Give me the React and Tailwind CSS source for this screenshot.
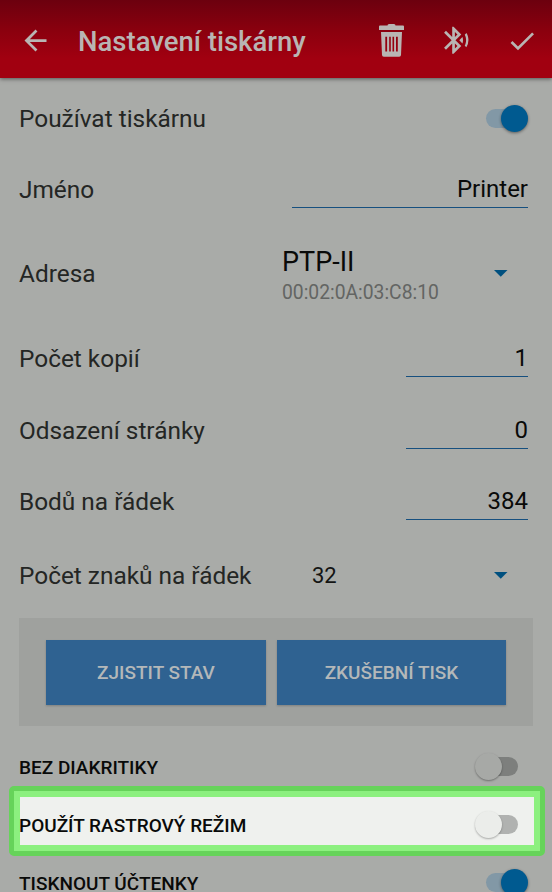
import React from 'react';
import { MdArrowBack, MdBluetoothAudio, MdCheck } from 'react-icons/md';

function TrashIcon() {
  return (
    <svg width="25" height="33" viewBox="0 0 25 33" fill="currentColor" aria-hidden="true">
      <path d="M8.500 1.500Q8.500 0 10 0h5q1.500 0 1.500 1.500H24q1 0 1 1V6H0V2.500q0-1 1-1z" />
      <path
        fillRule="evenodd"
        d="M2 8h21l-1 23q-.1 1.700-1.800 1.700H4.800Q3.100 32.700 3 31zM6.300 12.700V27.500h1.800V12.700zM10.200 12.700V27.500h1.600V12.700zM13.500 12.700V27.500h1.600V12.700zM17 12.700V27.500h1.800V12.700z"
      />
    </svg>
  );
}

function Header() {
  return (
    <header className="relative z-10 flex h-[78px] shrink-0 items-center bg-linear-to-b from-[#6c000e] via-[#8b000e] via-40% to-[#a10010] to-75% pl-[19px] pr-[14px] text-[#b9b5b3] shadow-[0_1px_4px_rgba(0,0,0,0.5)]">
      <MdArrowBack size={33} className="mt-[3px]" />
      <h1 className="ml-[26px] mt-[5px] flex-1 text-[27.5px] font-medium leading-8 whitespace-nowrap">
        Nastavení tiskárny
      </h1>
      <div className="mt-[2px] flex items-center">
        <TrashIcon />
        <MdBluetoothAudio size={32.500} className="ml-[36px]" />
        <MdCheck size={32} className="ml-[34px] mt-px" />
      </div>
    </header>
  );
}

function Toggle({ on, bright }) {
  if (on) {
    return (
      <span className="relative mb-0.5 block h-[19px] w-[42px]">
        <span className="block h-[19px] w-[36px] rounded-full bg-[#8298a6]" />
        <span className="absolute -top-1 right-0 size-[27px] rounded-full bg-[#005a90] shadow-[0_1px_3px_rgba(0,0,0,0.45)]" />
      </span>
    );
  }
  return (
    <span className="relative mr-[10px] mb-0.5 block h-[19px] w-[42px]">
      <span
        className={
          bright
            ? 'ml-auto block h-[19px] w-[36px] rounded-full bg-[#b0b2b0]'
            : 'ml-auto block h-[19px] w-[36px] rounded-full bg-[#7d7f7d]'
        }
      />
      <span
        className={
          bright
            ? 'absolute -top-1 -left-px size-[27px] rounded-full bg-[#ebedea] shadow-[0_1px_2px_rgba(0,0,0,0.3)]'
            : 'absolute -top-1 -left-px size-[27px] rounded-full bg-[#a7a9a6] shadow-[0_1px_2px_rgba(0,0,0,0.35)]'
        }
      />
    </span>
  );
}

function Caret() {
  return (
    <svg width="14" height="7" viewBox="0 0 14 7" className="mr-5 mb-px" aria-hidden="true">
      <path d="M0 0h13.500L6.750 6.800z" fill="#00507f" />
    </svg>
  );
}

function Row({ label, className, children }) {
  return (
    <div className={`flex items-center pl-[19px] pr-6 text-2xl text-[#242624] ${className}`}>
      <span className="flex-1 text-[24.4px] whitespace-nowrap">{label}</span>
      {children}
    </div>
  );
}

function Field({ value, className }) {
  return (
    <div className={`h-9 border-b border-[#17507f] text-right leading-[35px] text-[#090a09] ${className}`}>
      {value}
    </div>
  );
}

function SwitchRow({ label, on, bright }) {
  return (
    <div className="flex h-[58px] shrink-0 items-center justify-between pl-[19px] pr-6 text-[19px] font-medium text-[#090a09]">
      <span className="pt-0.5 leading-4">{label}</span>
      <Toggle on={on} bright={bright} />
    </div>
  );
}

export default function App() {
  return (
    <div className="flex h-[892px] w-[552px] flex-col overflow-hidden bg-[#a9aba8] font-['Roboto',sans-serif]">
      <Header />
      <main className="flex flex-col">
        <Row label="Používat tiskárnu" className="h-[82px]">
          <Toggle on />
        </Row>
        <Row label="Jméno" className="h-[60px]">
          <Field value="Printer" className="w-[236px]" />
        </Row>
        <Row label="Adresa" className="h-[108px]">
          <div className="flex w-[246px] items-center justify-between">
            <div className="pt-[5px]">
              <div className="text-[27px] leading-8 text-[#090a09]">PTP-II</div>
              <div className="text-[19.3px] leading-[30px] text-[#636563]">00:02:0A:03:C8:10</div>
            </div>
            <Caret />
          </div>
        </Row>
        <Row label="Počet kopií" className="h-[62px]">
          <Field value="1" className="w-[122px]" />
        </Row>
        <Row label="Odsazení stránky" className="h-[82px]">
          <Field value="0" className="w-[122px]" />
        </Row>
        <Row label="Bodů na řádek" className="h-[60px]">
          <Field value="384" className="w-[122px]" />
        </Row>
        <Row label="Počet znaků na řádek" className="h-[86px] pt-0.5">
          <div className="flex w-[216px] items-center justify-between">
            <span className="text-[22px] text-[#131413]">32</span>
            <Caret />
          </div>
        </Row>

        <div className="ml-[19px] flex h-[108px] w-[514px] gap-[11px] bg-[#9fa19e] px-[27px] pt-[22px] text-[19px] font-medium text-[#b4b8b9]">
          <button className="h-[65px] w-[220px] bg-[#2f6291] pt-0.5 shadow-[0_1px_2px_rgba(0,0,0,0.2)]">ZJISTIT STAV</button>
          <button className="h-[65px] w-[229px] bg-[#2f6291] pt-0.5 shadow-[0_1px_2px_rgba(0,0,0,0.2)]">ZKUŠEBNÍ TISK</button>
        </div>

        <div className="mt-3 flex flex-col">
          <SwitchRow label="BEZ DIAKRITIKY" />
          <div className="relative">
            {/* highlight frame around the raster mode switch */}
            <div className="absolute -top-[10px] left-[9px] h-[70px] w-[536px] rounded-[5px] border-[5px] border-[#66d35a]">
              <div className="h-full w-full border-[6px] border-[#8cf07f] bg-[#eff1ee]" />
            </div>
            <div className="relative">
              <SwitchRow label="POUŽÍT RASTROVÝ REŽIM" bright />
            </div>
          </div>
          <SwitchRow label="TISKNOUT ÚČTENKY" on />
        </div>
      </main>
    </div>
  );
}
